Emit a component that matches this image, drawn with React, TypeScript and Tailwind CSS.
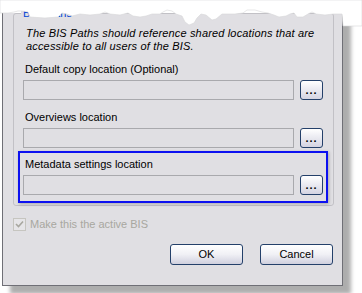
import React from 'react';

const tear =
  '0,0 362,0 362,26 343,26 342,14 333,14 325,15 316,14 312,12 308,14 303,17 297,17 294,13 290,14 286,16 279,17 274,15 268,13 262,12 255,10 247,10 243,13 235,14 222,14 216,19 212,20 206,15 201,14 197,18 194,23 189,25 185,22 182,16 176,14 172,11 167,10 163,12 160,14 152,14 146,16 140,17 133,16 128,13 120,15 110,14 105,12 100,14 90,15 80,14 72,16 67,14 62,13 58,17 45,18 30,17 28,12 22,11 18,11 14,12 8,13 0,13';

const Browse = () => (
  <button className="flex h-[20px] w-[23px] items-end justify-center rounded-[3px] border border-[#24406a] bg-gradient-to-b from-white to-[#d4d4e2] pb-[3px] text-[11px] leading-none font-bold tracking-[1px] text-black">
    ...
  </button>
);

const PathField = () => (
  <div className="flex items-start gap-[6px]">
    <div className="h-[20px] flex-1 border border-[#a9a9ad] bg-[#e0dfe3]" />
    <Browse />
  </div>
);

const PushButton = ({ label }: { label: string }) => (
  <button className="h-[21px] w-[73px] rounded-[3px] border border-[#24406a] bg-gradient-to-b from-white via-[#f0f0f5] to-[#d0d0de] text-[11px] leading-none text-black">
    {label}
  </button>
);

export default function App() {
  return (
    <div className="relative h-[293px] w-[362px] overflow-hidden bg-white font-['Liberation_Sans',Arial,sans-serif] text-[11px] leading-[13px] text-black">
      <div className="ml-[2px] h-[273px] w-[341px] border-x border-b border-[#6f6f76] bg-[#e0dfe3] shadow-[8px_8px_4px_rgba(0,0,0,0.32)]">
        <div className="ml-[10px] mt-[13px] w-[321px]">
          <div className="relative h-[193px] w-[321px] rounded-[3px] border border-[#c2c1c6] pl-[9px] pr-[10px] pt-[13px]">
            <span className="absolute -top-[7px] left-[7px] bg-[#e0dfe3] px-[2px] text-[#0046d5]">BIS Paths</span>
            <p className="pl-[3px] italic tracking-[0.16px]">
              The BIS Paths should reference shared locations that are
              <br />
              accessible to all users of the BIS.
            </p>
            <div className="mt-[10px] pl-[2px]">Default copy location (Optional)</div>
            <div className="mt-[4px]">
              <PathField />
            </div>
            <div className="mt-[11px] pl-[2px]">Overviews location</div>
            <div className="mt-[4px]">
              <PathField />
            </div>
            <div className="-mx-[5px] mt-[3px] border-2 border-[#0c10f0] px-[3px] pb-[6px] pt-[5px] shadow-[1px_1px_3px_rgba(0,0,0,0.25)]">
              <div className="pl-[2px]">Metadata settings location</div>
              <div className="mt-[4px]">
                <PathField />
              </div>
            </div>
          </div>
          <label className="mt-[12px] flex items-center gap-[4px] text-[#a8a7a0]">
            <span className="flex h-[13px] w-[13px] items-center justify-center border border-[#c6c5c0] bg-[#e6e5e8]">
              <svg width="9" height="9" viewBox="0 0 9 9">
                <path d="M1 4 L3.5 6.5 L8 1.5" fill="none" stroke="#a8a7a0" strokeWidth="1.6" />
              </svg>
            </span>
            Make this the active BIS
          </label>
          <div className="mt-[13px] flex w-[321px] justify-end gap-[17px] pr-[1px]">
            <PushButton label="OK" />
            <PushButton label="Cancel" />
          </div>
        </div>
      </div>
      <svg className="absolute left-0 top-0" width="362" height="30" viewBox="0 0 362 30">
        <polygon points={tear} fill="#ffffff" stroke="#d6d6d8" strokeWidth="0.6" />
      </svg>
    </div>
  );
}
